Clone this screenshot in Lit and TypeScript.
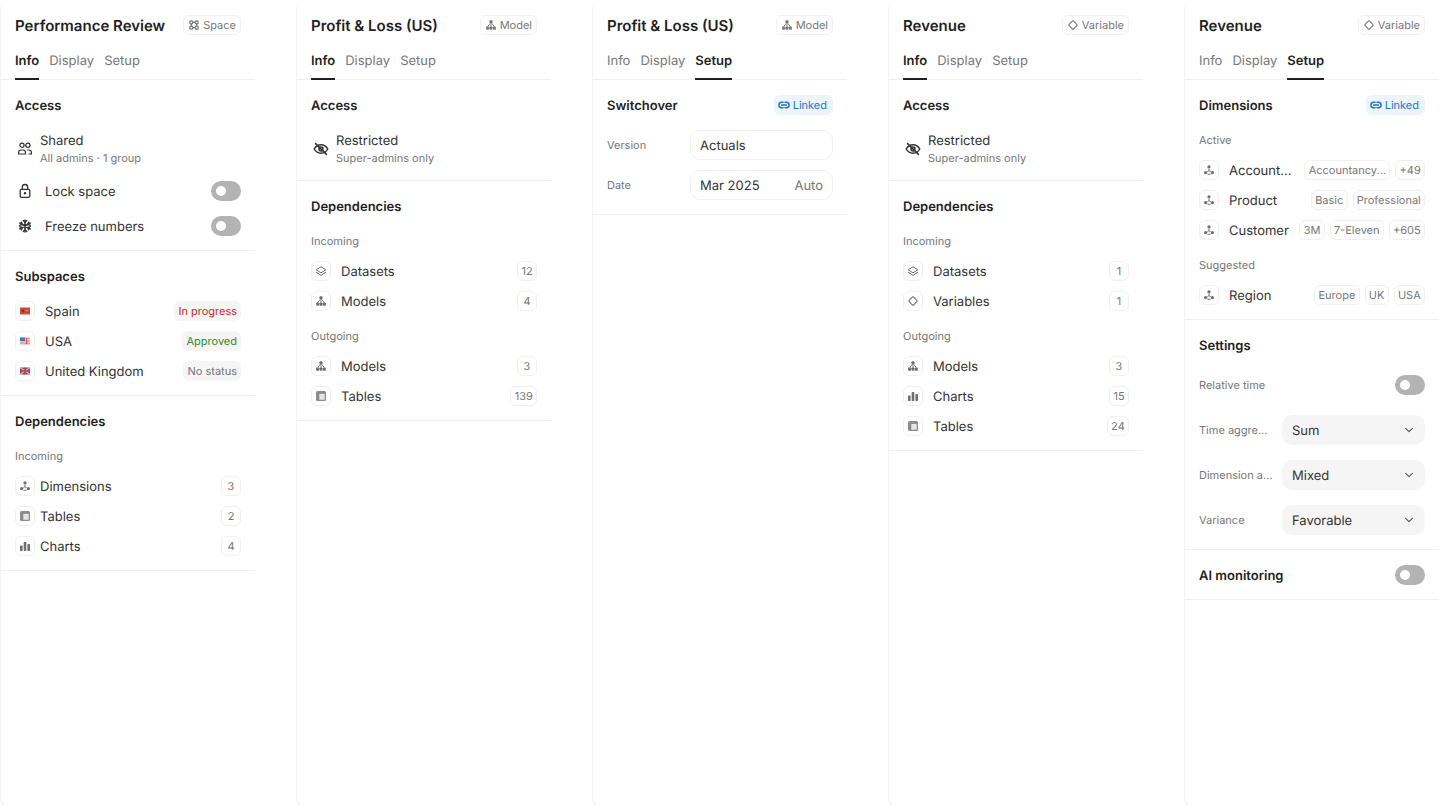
import { LitElement, html, css, svg } from "lit";
import { customElement } from "lit/decorators.js";

const icons: Record<string, any> = {
  space: svg`<g fill="none" stroke="currentColor" stroke-width="1.2"><rect x="1.8" y="1.8" width="3" height="3" rx="1"/><rect x="7.2" y="1.8" width="3" height="3" rx="1"/><rect x="1.8" y="7.2" width="3" height="3" rx="1"/><rect x="7.2" y="7.2" width="3" height="3" rx="1"/><path d="M4.8 3.3h2.4M4.8 8.7h2.4M3.3 4.8v2.4M8.7 4.8v2.4"/></g>`,
  model: svg`<g fill="currentColor"><rect x="4.4" y="1.2" width="3.2" height="3.2" rx=".8"/><rect x="1.2" y="7.6" width="2.9" height="3.2" rx=".7"/><rect x="4.55" y="7.6" width="2.9" height="3.2" rx=".7"/><rect x="7.9" y="7.6" width="2.9" height="3.2" rx=".7"/></g><path d="M6 4.4v3.2M2.7 7.6 5 4.6M9.3 7.6 7 4.6" fill="none" stroke="currentColor" stroke-width=".9"/>`,
  variable: svg`<rect x="2.8" y="2.8" width="6.4" height="6.4" rx="1" transform="rotate(45 6 6)" fill="none" stroke="currentColor" stroke-width="1.1"/>`,
  dim: svg`<g fill="currentColor"><circle cx="6" cy="2.9" r="1.6"/><circle cx="2.6" cy="8.6" r="1.6"/><circle cx="9.4" cy="8.6" r="1.6"/></g><path d="M6 5v1.6M6 6.6 4.3 7.8M6 6.6l1.7 1.2M4.4 10.2h3.2" fill="none" stroke="currentColor" stroke-width="1"/>`,
  table: svg`<rect x="1" y="1" width="10" height="10" rx="1.5" fill="#8c8c8c"/><rect x="4.3" y="3.9" width="5.4" height="5.8" fill="#e6e6e6"/>`,
  chart: svg`<g fill="currentColor"><rect x="1" y="5.5" width="2.6" height="5.5" rx=".7"/><rect x="4.7" y="2" width="2.6" height="9" rx=".7"/><rect x="8.4" y="4" width="2.6" height="7" rx=".7"/></g>`,
  layers: svg`<g fill="none" stroke="currentColor" stroke-width="1" stroke-linejoin="round"><path d="M6 1.8 10.8 4.8 6 7.8 1.2 4.8Z"/><path d="M1.4 7.3 6 10.4l4.6-3.1" stroke-linecap="round"/></g>`,
  link: svg`<path d="M5 3.2H3.7a2.8 2.8 0 0 0 0 5.6H5M7 3.2h1.3a2.8 2.8 0 0 1 0 5.6H7M3.6 6h4.8" fill="none" stroke="currentColor" stroke-width="1.5" stroke-linecap="round"/>`,
  chev: svg`<path d="M2.6 4.4 6 7.6l3.4-3.2" fill="none" stroke="currentColor" stroke-width="1.1" stroke-linecap="round" stroke-linejoin="round"/>`,
  users: svg`<g fill="none" stroke="currentColor" stroke-width="1.2" stroke-linecap="round"><circle cx="5" cy="4.2" r="2.1"/><circle cx="10.9" cy="4.2" r="2.1"/><path d="M1.6 13v-1.4A2.6 2.6 0 0 1 4.2 9h1.7a2.6 2.6 0 0 1 2.6 2.6V13Z"/><path d="M10.8 9h1a2.6 2.6 0 0 1 2.6 2.6V13h-2.6"/></g>`,
  lock: svg`<g fill="none" stroke="currentColor" stroke-width="1.3"><rect x="3.2" y="6.3" width="9.6" height="8" rx="1.3"/><path d="M5.3 6.3V4.2a2.7 2.7 0 0 1 5.4 0v2.1"/></g><circle cx="8" cy="10.3" r="1.2" fill="currentColor"/>`,
  snow: svg`<g fill="none" stroke="currentColor" stroke-linecap="round" stroke-linejoin="round"><path d="M8 2v12M2.8 5l10.4 6M2.8 11l10.4-6" stroke-width="1.5"/><path d="M6.2 2.6 8 4.2l1.8-1.6M6.2 13.4 8 11.8l1.8 1.6M2.7 7.3l2.3-.8-.5-2.4M13.3 8.7l-2.3.8.5 2.4M4.5 11.9l.5-2.4-2.3-.8M11.5 4.1l-.5 2.4 2.3.8" stroke-width="1.4"/></g>`,
  eyeoff: svg`<g fill="none" stroke="currentColor" stroke-width="1.5" stroke-linecap="round" stroke-linejoin="round"><path d="M1.2 8S3.6 3.8 8 3.8 14.8 8 14.8 8 12.4 12.2 8 12.2 1.2 8 1.2 8Z"/><circle cx="8" cy="8" r="2"/><path d="M2.6 2.6l10.8 10.8"/></g>`,
  es: svg`<rect x="1" y="2.5" width="10" height="7" fill="#d9483f"/><rect x="1" y="4.3" width="10" height="3.4" fill="#b9483f"/><rect x="3" y="4.5" width="2" height="2.8" fill="#7d3a33"/><rect x="6.5" y="5" width="3" height="1.2" fill="#e58a80"/>`,
  us: svg`<rect x="1" y="2.5" width="10" height="7" fill="#e9a09a"/><rect x="1" y="4" width="10" height="1" fill="#f3d6d3"/><rect x="1" y="6.4" width="10" height="1" fill="#f3d6d3"/><rect x="1" y="2.5" width="5" height="3.6" fill="#3f7dc0"/><rect x="7" y="3" width="1.2" height="6" fill="#d9534c"/>`,
  uk: svg`<rect x="1" y="2.5" width="10" height="7" fill="#5a5670"/><path d="M1 2.5l10 7M11 2.5l-10 7" stroke="#e6b8b8" stroke-width="1.2"/><path d="M6 2.5v7M1 6h10" stroke="#d0414a" stroke-width="1.6"/>`,
};
const ic = (n: string) => html`<svg class="i" width="12" height="12" viewBox="0 0 12 12">${icons[n]}</svg>`;
const ic2 = (n: string) => html`<svg class="i" width="16" height="16" viewBox="0 0 16 16">${icons[n]}</svg>`;

type Row = { icon: string; name: string; n?: string };

@customElement("app-root")
export class AppRoot extends LitElement {
  static styles = css`
    :host { display: flex; gap: 40px; width: 1440px; height: 810px; overflow: hidden; background: #fff; font-family: Inter, "Noto Sans", sans-serif; color: #1f1f1f; text-rendering: geometricPrecision; }
    * { box-sizing: border-box; }
    .i { display: block; flex: none; }
    .panel { width: 256px; height: 810px; flex: none; border: 1px solid #f4f4f4; border-top-color: transparent; border-bottom-color: transparent; border-right-color: transparent; border-radius: 12px; }
    .head { height: 49px; padding: 0 14px 1px; display: flex; align-items: center; justify-content: space-between; }
    .title { font-size: 15px; font-weight: 600; }
    .type { height: 20px; display: flex; align-items: center; gap: 3px; padding: 0 4px; border: 1px solid #f0f0f0; border-radius: 6px; font-size: 11px; color: #777; }
    .tabs { height: 30px; padding: 0 14px; display: flex; gap: 10px; border-bottom: 1px solid #f0f0f0; }
    .tab { height: 30px; padding-top: 1px; font-size: 13px; line-height: 20px; color: #777; border-bottom: 2px solid transparent; }
    .tab.on { color: #1f1f1f; font-weight: 600; border-bottom-color: #1f1f1f; }
    .sec { padding: 15px 14px 14px; border-bottom: 1px solid #f0f0f0; display: flex; flex-direction: column; }
    .sec-h { height: 20px; padding-top: 1px; display: flex; align-items: center; justify-content: space-between; font-size: 13px; font-weight: 600; }
    .sec-h > div { margin-top: -1px; }
    .rows { display: flex; flex-direction: column; gap: 10px; margin-top: 15px; }
    .rows.tight { gap: 15px; margin-top: 16px; }
    .label { height: 14px; line-height: 14px; font-size: 11px; color: #777; margin-bottom: 13px; margin-top: 18px; }
    .label + .rows { margin-top: 0; }
    .row { height: 20px; display: flex; align-items: center; gap: 10px; font-size: 13px; color: #333; }
    .row.near { gap: 5px; }
    .row .name { flex: 1; min-width: 0; padding-top: 1px; white-space: nowrap; overflow: hidden; text-overflow: ellipsis; }
    .box { width: 20px; height: 20px; flex: none; display: flex; align-items: center; justify-content: center; border: 1px solid #f0f0f0; border-radius: 6px; color: #6e6e6e; }
    .plain { width: 20px; height: 20px; flex: none; display: flex; align-items: center; justify-content: center; color: #333; }
    .chips { display: flex; gap: 5px; flex: none; }
    .chip { height: 20px; padding: 0 3.25px; min-width: 20px; display: flex; align-items: center; justify-content: center; border: 1px solid #f0f0f0; border-radius: 6px; font-size: 11px; color: #777; white-space: nowrap; }
    .status { height: 20px; padding: 0 4px; display: flex; align-items: center; border-radius: 6px; background: #f5f5f5; font-size: 11px; }
    .red { color: #c92a2a; } .green { color: #2b8a2f; } .gray { color: #777; }
    .toggle { width: 30px; height: 20px; flex: none; border-radius: 10px; background: #b3b3b3; padding: 5px; }
    .toggle::after { content: ""; display: block; width: 10px; height: 10px; border-radius: 50%; background: #fff; }
    .two { height: 35px; display: flex; align-items: center; gap: 5px; font-size: 13px; color: #333; }
    .two .sub { font-size: 11px; color: #777; line-height: 18px; margin-top: -1px; }
    .two .nm { line-height: 18px; padding-top: 1px; }
    .linked { height: 20px; padding: 0 6px 0 4px; display: flex; align-items: center; gap: 3px; background: #eef4fb; border-radius: 6px; color: #1976c4; font-size: 11px; font-weight: 400; }
    .form { display: grid; grid-template-columns: 83px 143px; align-items: center; font-size: 11px; color: #777; }
    .fl { white-space: nowrap; overflow: hidden; text-overflow: ellipsis; padding-right: 8px; }
    .field { height: 30px; border-radius: 10px; padding: 1px 9px 0; display: flex; align-items: center; justify-content: space-between; font-size: 13px; color: #333; border: 1px solid #f0f0f0; }
    .field.sel { background: #f5f5f5; border: 0; padding: 1px 10px 0; }
    .field .auto { color: #777; }
    .field .i { color: #555; margin-bottom: 1px; }
    .f1 { row-gap: 10px; margin-top: 15px; }
    .f2 { row-gap: 15px; margin-top: 20px; }
    .rel { grid-column: 1 / 3; height: 20px; display: flex; align-items: center; justify-content: space-between; margin-bottom: 5px; }
  `;

  head(title: string, icon: string, type: string) {
    return html`<div class="head"><div class="title">${title}</div><div class="type">${ic(icon)}${type}</div></div>`;
  }
  tabs(on: string) {
    return html`<div class="tabs">${["Info", "Display", "Setup"].map((t) => html`<div class="tab ${t === on ? "on" : ""}">${t}</div>`)}</div>`;
  }
  row(r: Row, near = false) {
    return html`<div class="row ${near ? "near" : ""}"><div class="box">${ic(r.icon)}</div><div class="name">${r.name}</div>${r.n ? html`<div class="chip">${r.n}</div>` : ""}</div>`;
  }
  rows(list: Row[], near = false) {
    return html`<div class="rows">${list.map((r) => this.row(r, near))}</div>`;
  }
  restricted() {
    return html`<div class="sec"><div class="sec-h">Access</div>
      <div class="rows tight"><div class="two"><div class="plain">${ic2("eyeoff")}</div><div><div class="nm">Restricted</div><div class="sub">Super-admins only</div></div></div></div></div>`;
  }
  dimRow(name: string, chips: string[]) {
    return html`<div class="row"><div class="box">${ic("dim")}</div><div class="name">${name}</div><div class="chips">${chips.map((c) => html`<div class="chip">${c}</div>`)}</div></div>`;
  }

  render() {
    return html`
      <section class="panel">
        ${this.head("Performance Review", "space", "Space")}${this.tabs("Info")}
        <div class="sec"><div class="sec-h">Access</div>
          <div class="rows tight">
            <div class="two"><div class="plain">${ic2("users")}</div><div><div class="nm">Shared</div><div class="sub">All admins · 1 group</div></div></div>
            <div class="row"><div class="plain">${ic2("lock")}</div><div class="name">Lock space</div><div class="toggle"></div></div>
            <div class="row"><div class="plain">${ic2("snow")}</div><div class="name">Freeze numbers</div><div class="toggle"></div></div>
          </div>
        </div>
        <div class="sec"><div class="sec-h">Subspaces</div>
          <div class="rows">
            <div class="row"><div class="box">${ic("es")}</div><div class="name">Spain</div><div class="status red">In progress</div></div>
            <div class="row"><div class="box">${ic("us")}</div><div class="name">USA</div><div class="status green">Approved</div></div>
            <div class="row"><div class="box">${ic("uk")}</div><div class="name">United Kingdom</div><div class="status gray">No status</div></div>
          </div>
        </div>
        <div class="sec"><div class="sec-h">Dependencies</div><div class="label">Incoming</div>
          ${this.rows([{ icon: "dim", name: "Dimensions", n: "3" }, { icon: "table", name: "Tables", n: "2" }, { icon: "chart", name: "Charts", n: "4" }], true)}
        </div>
      </section>

      <section class="panel">
        ${this.head("Profit & Loss (US)", "model", "Model")}${this.tabs("Info")}
        ${this.restricted()}
        <div class="sec"><div class="sec-h">Dependencies</div><div class="label">Incoming</div>
          ${this.rows([{ icon: "layers", name: "Datasets", n: "12" }, { icon: "model", name: "Models", n: "4" }])}
          <div class="label">Outgoing</div>
          ${this.rows([{ icon: "model", name: "Models", n: "3" }, { icon: "table", name: "Tables", n: "139" }])}
        </div>
      </section>

      <section class="panel">
        ${this.head("Profit & Loss (US)", "model", "Model")}${this.tabs("Setup")}
        <div class="sec"><div class="sec-h">Switchover<div class="linked">${ic("link")}Linked</div></div>
          <div class="form f1">
            <div class="fl">Version</div><div class="field">Actuals</div>
            <div class="fl">Date</div><div class="field">Mar 2025<span class="auto">Auto</span></div>
          </div>
        </div>
      </section>

      <section class="panel">
        ${this.head("Revenue", "variable", "Variable")}${this.tabs("Info")}
        ${this.restricted()}
        <div class="sec"><div class="sec-h">Dependencies</div><div class="label">Incoming</div>
          ${this.rows([{ icon: "layers", name: "Datasets", n: "1" }, { icon: "variable", name: "Variables", n: "1" }])}
          <div class="label">Outgoing</div>
          ${this.rows([{ icon: "model", name: "Models", n: "3" }, { icon: "chart", name: "Charts", n: "15" }, { icon: "table", name: "Tables", n: "24" }])}
        </div>
      </section>

      <section class="panel">
        ${this.head("Revenue", "variable", "Variable")}${this.tabs("Setup")}
        <div class="sec"><div class="sec-h">Dimensions<div class="linked">${ic("link")}Linked</div></div>
          <div class="label">Active</div>
          <div class="rows">
            ${this.dimRow("Accountancy", ["Accountancy...", "+49"])}
            ${this.dimRow("Product", ["Basic", "Professional"])}
            ${this.dimRow("Customer", ["3M", "7-Eleven", "+605"])}
          </div>
          <div class="label">Suggested</div>
          <div class="rows">${this.dimRow("Region", ["Europe", "UK", "USA"])}</div>
        </div>
        <div class="sec"><div class="sec-h">Settings</div>
          <div class="form f2">
            <div class="rel">Relative time<div class="toggle"></div></div>
            <div class="fl">Time aggregation</div><div class="field sel">Sum${ic("chev")}</div>
            <div class="fl">Dimension aggregation</div><div class="field sel">Mixed${ic("chev")}</div>
            <div class="fl">Variance</div><div class="field sel">Favorable${ic("chev")}</div>
          </div>
        </div>
        <div class="sec"><div class="sec-h">AI monitoring<div class="toggle"></div></div></div>
      </section>
    `;
  }
}
